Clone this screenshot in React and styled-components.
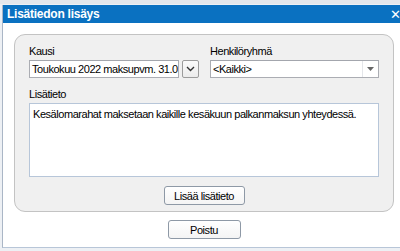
import React from 'react';
import styled, { createGlobalStyle } from 'styled-components';

const Global = createGlobalStyle`
  html, body { margin: 0; padding: 0; }
  body {
    background: #eef1f5;
    font-family: "Liberation Sans", Arial, sans-serif;
    font-size: 11px;
    letter-spacing: -0.45px;
    color: #000;
  }
`;

const Desktop = styled.div`
  width: 400px;
  height: 251px;
  overflow: hidden;
  padding: 1px 0 0 2px;
  box-sizing: border-box;
  background: #edf0f4;
  border-top: 4px solid #e3e7ec;
`;

const Window = styled.div`
  width: 410px;
  height: 243px;
  box-sizing: border-box;
  background: #ffffff;
  border-left: 1px solid #aab6c6;
  border-bottom: 1px solid #b8c6d8;
  display: flex;
  flex-direction: column;
`;

const TitleBar = styled.div`
  height: 18px;
  background: #0a71c1;
  display: flex;
  align-items: center;
  padding: 0 0 0 4px;
  color: #fff;
  font-weight: bold;
  font-size: 12px;
  letter-spacing: -0.25px;
  width: 398px;
  box-sizing: border-box;
  justify-content: space-between;
`;

const Close = styled.span`
  font-size: 13px;
  font-weight: normal;
  line-height: 1;
`;

const Body = styled.div`
  width: 391px;
  display: flex;
  flex-direction: column;
  align-items: center;
  padding: 11px 0 0 11px;
  box-sizing: border-box;
`;

const Panel = styled.div`
  width: 380px;
  height: 178px;
  box-sizing: border-box;
  background: #f0f0f0;
  border: 1px solid #c3c3c3;
  border-radius: 11px;
  padding: 9px 14px 0 14px;
  display: flex;
  flex-direction: column;
`;

const Row = styled.div`
  display: flex;
  gap: 11px;
`;

const Field = styled.div`
  display: flex;
  flex-direction: column;
  margin-top: ${p => p.$mt || 0}px;
`;

const Label = styled.div`
  height: 14px;
  line-height: 14px;
  margin-bottom: 2px;
`;

const Combo = styled.div`
  display: flex;
  gap: 3px;
`;

const Input = styled.div`
  width: ${p => p.$w}px;
  height: 18px;
  box-sizing: border-box;
  background: #fff;
  border: 1px solid #abadb3;
  border-top-color: #a3a6ad;
  padding: 0 2px;
  line-height: 16px;
  white-space: nowrap;
  overflow: hidden;
  display: flex;
  align-items: center;
`;

const DropBtn = styled.div`
  width: 17px;
  height: 18px;
  box-sizing: border-box;
  border: 1px solid #9c9c9c;
  border-radius: 2px;
  background: linear-gradient(#fbfbfb, #ececec);
  display: flex;
  align-items: center;
  justify-content: center;
`;

const Arrow = styled.div`
  margin-left: auto;
  width: 15px;
  height: 16px;
  border-left: 1px solid #e4e6ea;
  display: flex;
  align-items: center;
  justify-content: center;
  margin-right: -2px;
`;

const Text = styled.div`
  flex: 1;
`;

const TextArea = styled.div`
  width: 350px;
  height: 74px;
  box-sizing: border-box;
  background: #fff;
  border: 1px solid #b7c6d9;
  padding: 3px 3px;
  line-height: 14px;
`;

const ButtonRow = styled.div`
  display: flex;
  justify-content: center;
  margin-top: 9px;
`;

const Button = styled.div`
  width: ${p => p.$w}px;
  height: 19px;
  box-sizing: border-box;
  border: 1px solid #8e99a6;
  border-radius: 3px;
  background: linear-gradient(#ffffff, #f4f4f4);
  display: flex;
  align-items: center;
  justify-content: center;
  margin-top: ${p => p.$mt || 0}px;
`;

export default function App() {
  return (
    <>
      <Global />
      <Desktop>
        <Window>
          <TitleBar>
            <span>Lisätiedon lisäys</span>
            <Close>✕</Close>
          </TitleBar>
          <Body>
            <Panel>
              <Row>
                <Field>
                  <Label>Kausi</Label>
                  <Combo>
                    <Input $w={150}>Toukokuu 2022 maksupvm. 31.0</Input>
                    <DropBtn>
                      <svg width="9" height="6" viewBox="0 0 9 6">
                        <path d="M1 1 L4.5 4.5 L8 1" fill="none" stroke="#333" strokeWidth="1.4" />
                      </svg>
                    </DropBtn>
                  </Combo>
                </Field>
                <Field>
                  <Label>Henkilöryhmä</Label>
                  <Input $w={169}>
                    <Text>&lt;Kaikki&gt;</Text>
                    <Arrow>
                      <svg width="7" height="4" viewBox="0 0 7 4">
                        <path d="M0 0 L7 0 L3.5 4 Z" fill="#666" />
                      </svg>
                    </Arrow>
                  </Input>
                </Field>
              </Row>
              <Field $mt={9}>
                <Label>Lisätieto</Label>
                <TextArea>Kesälomarahat maksetaan kaikille kesäkuun palkanmaksun yhteydessä.</TextArea>
              </Field>
              <ButtonRow>
                <Button $w={81}>Lisää lisätieto</Button>
              </ButtonRow>
            </Panel>
            <Button $w={73} $mt={8}>Poistu</Button>
          </Body>
        </Window>
      </Desktop>
    </>
  );
}
